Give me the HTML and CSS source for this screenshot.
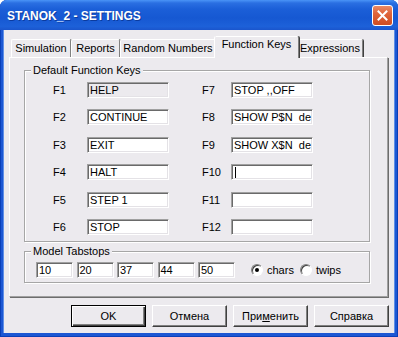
FILE: index.html
```html
<!DOCTYPE html>
<html lang="ru">
<head>
    <meta charset="UTF-8">
    <meta name="viewport" content="width=device-width, initial-scale=1.0">
    <title>STANOK_2 - SETTINGS</title>
    <link rel="stylesheet" href="styles.css">
</head>
<body>
    <div class="window">
        <div class="titlebar">
            <span class="title">STANOK_2 - SETTINGS</span>
            <button class="close" title="Close">
                <svg width="11" height="11" viewBox="0 0 11 11">
                    <path d="M1.5 1.5 L9.5 9.5 M9.5 1.5 L1.5 9.5" stroke="#fff" stroke-width="2" stroke-linecap="square"/>
                </svg>
            </button>
        </div>

        <div class="client">
            <div class="tabs">
                <div class="tab tab-sim">Simulation</div>
                <div class="tab tab-rep">Reports</div>
                <div class="tab tab-rnd">Random Numbers</div>
                <div class="tab tab-fk active">Function Keys</div>
                <div class="tab tab-exp">Expressions</div>
            </div>

            <div class="panel">
                <fieldset class="group">
                    <legend>Default Function Keys</legend>
                    <div class="keys">
                        <div class="keycol">
                            <div class="keyrow"><span class="fkey">F1</span><div class="field readonly">HELP</div></div>
                            <div class="keyrow"><span class="fkey">F2</span><div class="field">CONTINUE</div></div>
                            <div class="keyrow"><span class="fkey">F3</span><div class="field">EXIT</div></div>
                            <div class="keyrow"><span class="fkey">F4</span><div class="field">HALT</div></div>
                            <div class="keyrow"><span class="fkey">F5</span><div class="field">STEP 1</div></div>
                            <div class="keyrow"><span class="fkey">F6</span><div class="field">STOP</div></div>
                        </div>
                        <div class="keycol right">
                            <div class="keyrow"><span class="fkey">F7</span><div class="field">STOP ,,OFF</div></div>
                            <div class="keyrow"><span class="fkey">F8</span><div class="field">SHOW P$N&nbsp; de</div></div>
                            <div class="keyrow"><span class="fkey">F9</span><div class="field">SHOW X$N&nbsp; de</div></div>
                            <div class="keyrow"><span class="fkey">F10</span><div class="field"><span class="caret"></span></div></div>
                            <div class="keyrow"><span class="fkey">F11</span><div class="field"></div></div>
                            <div class="keyrow"><span class="fkey">F12</span><div class="field"></div></div>
                        </div>
                    </div>
                </fieldset>

                <fieldset class="group tabstops">
                    <legend>Model Tabstops</legend>
                    <div class="stops">
                        <div class="field small">10</div>
                        <div class="field small">20</div>
                        <div class="field small">37</div>
                        <div class="field small">44</div>
                        <div class="field small">50</div>
                        <div class="units">
                            <label class="opt"><span class="radio checked"></span>chars</label>
                            <label class="opt"><span class="radio"></span>twips</label>
                        </div>
                    </div>
                </fieldset>
            </div>

            <div class="buttons">
                <button class="btn default">OK</button>
                <button class="btn">Отмена</button>
                <button class="btn">При<u>м</u>енить</button>
                <button class="btn">Справка</button>
            </div>
        </div>
    </div>
</body>
</html>
```

FILE: styles.css
```css
body {
    margin: 0;
    background: #fff;
    font-family: 'Liberation Sans', Arial, sans-serif;
    font-size: 11px;
    color: #000;
}

.window {
    width: 398px;
    height: 337px;
    display: flex;
    flex-direction: column;
    background: #1c57d3;
    border-radius: 7px 7px 0 0;
    box-shadow: inset 1px 0 #0a3fb8, inset -1px 0 #0a3fb8, inset 0 -1px #0a3fb8;
    overflow: hidden;
}

/* title bar */
.titlebar {
    height: 30px;
    display: flex;
    align-items: center;
    justify-content: space-between;
    padding: 0 5px 0 7px;
    box-sizing: border-box;
    background: linear-gradient(to bottom, #4a94f7 0%, #2a6fe2 10%, #1b5fd8 30%, #1658d2 60%, #1d61d9 88%, #1a55cc 100%);
}

.title {
    color: #fff;
    font-weight: bold;
    font-size: 12px;
    margin-top: 2px;
    text-shadow: 1px 1px #0b3b9e;
}

.close {
    width: 21px;
    height: 21px;
    padding: 0;
    margin-top: 1px;
    border: 1px solid #fff;
    border-radius: 3px;
    background: linear-gradient(to bottom, #ea8a66 0%, #e0643a 40%, #cf4d22 100%);
    display: flex;
    align-items: center;
    justify-content: center;
}

/* client area */
.client {
    flex: 1;
    margin: 0 4px 4px;
    padding-top: 6px;
    background: #eceaee;
    box-shadow: -1px 0 #5f8fe6, 1px 0 #5f8fe6;
}

.tabs {
    display: flex;
    align-items: flex-end;
    height: 21px;
    padding-left: 7px;
}

.tab {
    height: 18px;
    box-sizing: border-box;
    border: 1px solid;
    border-bottom: none;
    border-color: #fff #808080 transparent #fff;
    border-radius: 2px 2px 0 0;
    box-shadow: 1px 0 #404040;
    text-align: center;
    line-height: 16px;
    white-space: nowrap;
}

.tab-sim { width: 60px; }
.tab-rep { width: 49px; }
.tab-rnd { width: 96px; }
.tab-fk { width: 81px; }
.tab-exp { width: 66px; }

.tab.active {
    position: relative;
    z-index: 1;
    width: 85px;
    height: 22px;
    margin: 0 -2px -1px;
    background: #eceaee;
    line-height: 15px;
}

.panel {
    width: 379px;
    margin-left: 5px;
    box-sizing: border-box;
    padding: 6px 0 13px 14px;
    border: 1px solid;
    border-color: #fff #a0a0a0 #a0a0a0 #fff;
    box-shadow: 1px 1px 0 #6d6d6d;
}

/* group boxes */
.group {
    width: 346px;
    box-sizing: border-box;
    margin: 0;
    padding: 0;
    min-width: 0;
    border: 1px solid #a6a6a6;
    box-shadow: inset 1px 1px #fff, 1px 1px #fff;
}

.group legend {
    margin-left: 6px;
    padding: 0 2px;
    line-height: 13px;
    background: #eceaee;
}

.tabstops {
    margin-top: 3px;
}

.keys {
    display: flex;
    gap: 33px;
    padding: 5px 0 6px 28px;
}

.keycol {
    display: flex;
    flex-direction: column;
    gap: 11.4px;
}

.keyrow {
    display: flex;
    align-items: center;
    height: 16px;
}

.fkey {
    width: 34px;
}

.keycol.right .fkey {
    width: 29px;
}

.field {
    width: 82px;
    height: 16px;
    box-sizing: border-box;
    padding-left: 2px;
    border: 1px solid;
    border-color: #a0a0a0 #fff #fff #a0a0a0;
    box-shadow: inset 1px 1px #6a6a6a, inset -1px -1px #e4e2e6;
    background: #fff;
    line-height: 14px;
    white-space: nowrap;
    overflow: hidden;
    display: flex;
    align-items: center;
}

.field.readonly {
    background: #eceaee;
}

.field.small {
    width: 37px;
}

.caret {
    width: 1px;
    height: 11px;
    margin-left: 1px;
    background: #000;
}

.stops {
    display: flex;
    align-items: center;
    gap: 3.5px;
    padding: 4px 0 4px 11px;
}

.units {
    display: flex;
    align-items: center;
    margin-left: 12.5px;
    gap: 6px;
}

.opt {
    display: flex;
    align-items: center;
    gap: 4px;
}

.radio {
    width: 12px;
    height: 12px;
    box-sizing: border-box;
    border-radius: 50%;
    border: 1px solid;
    border-color: #808080 #fff #fff #808080;
    box-shadow: inset 1px 1px #404040;
    background: #fff;
    display: flex;
    align-items: center;
    justify-content: center;
}

.radio.checked::after {
    content: '';
    width: 4px;
    height: 4px;
    border-radius: 50%;
    background: #000;
}

/* bottom buttons */
.buttons {
    display: flex;
    justify-content: flex-end;
    gap: 6px;
    margin-top: 8px;
    padding-right: 5px;
}

.btn {
    width: 75px;
    height: 22px;
    padding: 0;
    font-family: inherit;
    font-size: 11px;
    color: #000;
    background: #eceaee;
    border: 1px solid;
    border-color: #fff #404040 #404040 #fff;
    box-shadow: inset -1px -1px #808080;
}

.btn.default {
    border-color: #000;
    box-shadow: inset 1px 1px #fff, inset -1px -1px #404040, inset -2px -2px #808080;
}
```
